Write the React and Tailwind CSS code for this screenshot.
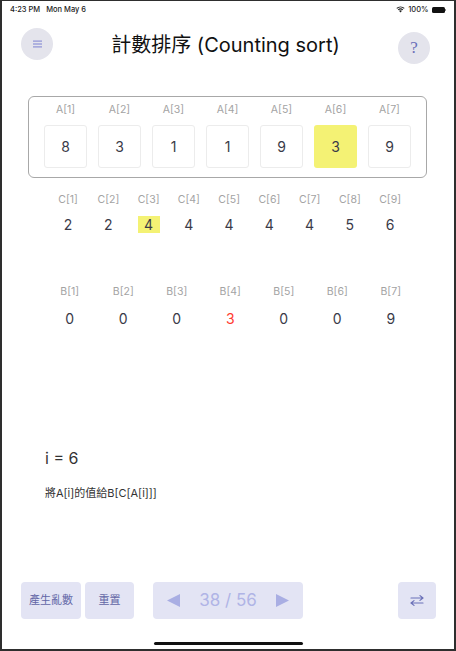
import React from "react";

const A = [8, 3, 1, 1, 9, 3, 9];
const C = [2, 2, 4, 4, 4, 4, 4, 5, 6];
const B = [0, 0, 0, 3, 0, 0, 9];

const font = { fontFamily: 'Inter, "Noto Sans CJK TC", sans-serif' };

export default function App() {
  return (
    <div
      className="w-[456px] h-[651px] bg-white border-l-2 border-r-2 border-b-2 border-t border-[#2e2e2e] flex flex-col text-[#3a3a48] overflow-hidden"
      style={font}
    >
      {/* status bar */}
      <div className="h-[17px] flex items-center justify-between pl-[8px] pr-[8px] text-[7.5px] font-medium text-[#222]">
        <div className="flex items-center gap-[6px]">
          <span>4:23 PM</span>
          <span>Mon May 6</span>
        </div>
        <div className="flex items-center gap-[3px]">
          <svg width="9" height="7" viewBox="0 0 18 14">
            <path d="M9 13 L12 9.6 A5 5 0 0 0 6 9.6 Z" fill="#222" />
            <path d="M3.6 7 A8 8 0 0 1 14.4 7 L13 8.6 A6 6 0 0 0 5 8.6 Z" fill="#222" />
            <path d="M0.8 4 A12 12 0 0 1 17.2 4 L15.8 5.6 A10 10 0 0 0 2.2 5.6 Z" fill="#222" />
          </svg>
          <span>100%</span>
          <div className="flex items-center">
            <div className="w-[13px] h-[6px] rounded-[1.5px] bg-[#111]" />
            <div className="w-[1px] h-[2px] bg-[#888] ml-[0.5px]" />
          </div>
        </div>
      </div>

      {/* header */}
      <div className="mt-[10px] h-[37px] flex items-start pl-[19px] pr-[24px]">
        <div className="w-[32px] h-[32px] rounded-full bg-[#e4e4ec] flex items-center justify-center">
          <svg width="9" height="8" viewBox="0 0 9 8">
            <rect x="0" y="0.5" width="9" height="1.2" fill="#8d92d6" />
            <rect x="0" y="3.4" width="9" height="1.2" fill="#8d92d6" />
            <rect x="0" y="6.3" width="9" height="1.2" fill="#8d92d6" />
          </svg>
        </div>
        <div className="flex-1 text-center text-[20px] leading-[28px] mt-[3px] text-[#111]">
          計數排序 (Counting sort)
        </div>
        <div
          className="w-[32px] h-[32px] mt-[4px] rounded-full bg-[#e4e4ec] flex items-center justify-center text-[17px] text-[#6b70b8]"
          style={{ fontFamily: '"Liberation Serif", serif' }}
        >
          ?
        </div>
      </div>

      {/* A box */}
      <div className="mt-[31px] ml-[26px] w-[399px] h-[82px] border border-[#a8a8a8] rounded-[6px] px-[15px] pt-[6px]">
        <div className="flex justify-between">
          {A.map((v, i) => (
            <div key={i} className="flex flex-col items-center w-[43px]">
              <div className="text-[10.5px] leading-[14px] text-[#a3a3a3]">A[{i + 1}]</div>
              <div
                className={
                  "mt-[8px] w-[43px] h-[43px] rounded-[3px] flex items-center justify-center text-[14px] " +
                  (i === 5 ? "bg-[#f4f274]" : "border border-[#ececec] bg-white")
                }
              >
                {v}
              </div>
            </div>
          ))}
        </div>
      </div>

      {/* C row */}
      <div className="mt-[15px] ml-[46px] flex">
        {C.map((v, i) => (
          <div key={i} className="w-[40.25px] flex flex-col items-center">
            <div className="text-[10.5px] leading-[14px] text-[#a3a3a3]">C[{i + 1}]</div>
            <div
              className={
                "mt-[9px] h-[17px] w-[22px] flex items-center justify-center text-[14px] " +
                (i === 2 ? "bg-[#f4f274]" : "")
              }
            >
              {v}
            </div>
          </div>
        ))}
      </div>

      {/* B row */}
      <div className="mt-[52px] ml-[41px] flex">
        {B.map((v, i) => (
          <div key={i} className="w-[53.5px] flex flex-col items-center">
            <div className="text-[10.5px] leading-[14px] text-[#a3a3a3]">B[{i + 1}]</div>
            <div
              className={
                "mt-[11px] h-[17px] flex items-center justify-center text-[14px] " +
                (i === 3 ? "text-[#ff3b30]" : "")
              }
            >
              {v}
            </div>
          </div>
        ))}
      </div>

      {/* step info */}
      <div className="mt-[121px] ml-[43px] text-[16px] leading-[20px] text-[#333]">i = 6</div>
      <div className="mt-[18px] ml-[43px] text-[11px] leading-[14px] text-[#333]">將A[i]的值給B[C[A[i]]]</div>

      {/* bottom buttons */}
      <div className="mt-[82px] h-[37px] flex items-stretch pl-[19px] pr-[18px]">
        <div className="w-[60px] rounded-[4px] bg-[#e3e4f4] flex items-center justify-center text-[11px] text-[#6266a6]">
          產生亂數
        </div>
        <div className="ml-[4px] w-[49px] rounded-[4px] bg-[#e3e4f4] flex items-center justify-center text-[11px] text-[#6266a6]">
          重置
        </div>
        <div className="ml-[19px] w-[150px] rounded-[4px] bg-[#e3e4f4] flex items-center justify-between px-[14px] text-[17px] text-[#b0b4e6]">
          <svg width="13" height="13" viewBox="0 0 13 13">
            <path d="M0 6.5 L13 0 L13 13 Z" fill="#a9aee3" />
          </svg>
          <span>38 / 56</span>
          <svg width="13" height="13" viewBox="0 0 13 13">
            <path d="M13 6.5 L0 0 L0 13 Z" fill="#a9aee3" />
          </svg>
        </div>
        <div className="flex-1" />
        <div className="w-[38px] rounded-[4px] bg-[#e3e4f4] flex items-center justify-center">
          <svg width="14" height="11" viewBox="0 0 14 11" fill="none" stroke="#6b70b8" strokeWidth="1.2" strokeLinecap="round" strokeLinejoin="round">
            <path d="M1 3 H13 M10 0.6 L13 3 L10 5.4" />
            <path d="M13 8 H1 M4 5.6 L1 8 L4 10.4" />
          </svg>
        </div>
      </div>

      {/* home indicator */}
      <div className="mt-[23px] ml-[152px] w-[149px] h-[3px] rounded-full bg-[#111]" />
    </div>
  );
}
